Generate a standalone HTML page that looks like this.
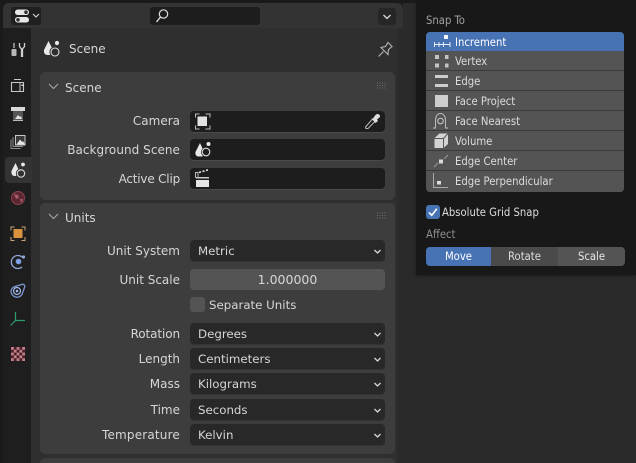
<!DOCTYPE html>
<html><head><meta charset="utf-8">
<style>
html,body{margin:0;padding:0;background:#1a1a1a}
#r{position:relative;width:636px;height:463px;overflow:hidden;background:#1a1a1a;font-family:"DejaVu Sans",sans-serif;font-size:12px;color:#d6d6d6}
#r div{position:absolute;box-sizing:border-box}
.t{white-space:nowrap;line-height:16px}
.c{font-size:11.2px;font-stretch:condensed;font-family:"DejaVu Sans Condensed","DejaVu Sans",sans-serif}
.l{text-align:right;width:180px;left:0}
.f{left:190px;width:195px;height:21px;background:#1d1d1d;border-radius:4px;box-shadow:0 1px 0 #4a4a4a}
.d{left:190px;width:195px;height:21px;background:#282828;border-radius:4px;box-shadow:0 1px 0 #333}
.d span{position:absolute;left:8px;top:3px;line-height:16px;white-space:nowrap;font-size:11.8px}
svg{position:absolute;overflow:visible}
.m{left:426px;width:198px;height:20px;background:#545454;border-bottom:1px solid #3a3a3a}
.m span{position:absolute;left:29px;top:3px;line-height:16px;font-size:11.2px;font-stretch:condensed;font-family:"DejaVu Sans Condensed","DejaVu Sans",sans-serif;color:#dcdcdc;white-space:nowrap}
</style></head><body>
<div id="r">
<!-- main areas -->
<div style="left:3px;top:3px;width:400px;height:25px;background:#333;border-radius:6px 6px 0 0"></div>
<div style="left:3px;top:28px;width:28px;height:435px;background:#1e1e1e"></div>
<div style="left:31px;top:28px;width:372px;height:435px;background:#2f2f2f"></div>
<div style="left:397px;top:28px;width:6px;height:435px;background:#2b2b2b"></div>
<div style="left:403px;top:0;width:233px;height:463px;background:#2a2a2a"></div>
<div style="left:0;top:0;width:636px;height:3px;background:#1a1a1a"></div>

<!-- header -->
<div style="left:11px;top:7px;width:30px;height:18px;background:#1f1f1f;border-radius:3px"></div>
<svg style="left:0;top:0" width="50" height="30"><rect x="15" y="9.500" width="14" height="5.500" rx="2.700" fill="#e6e6e6"/><rect x="15" y="17" width="14" height="5.500" rx="2.700" fill="#e6e6e6"/><circle cx="26" cy="12.200" r="1.800" fill="#333"/><circle cx="18" cy="19.800" r="1.800" fill="#333"/><path d="M33 14l3 3 3-3" fill="none" stroke="#ccc" stroke-width="1.200"/></svg>
<div style="left:150px;top:7px;width:110px;height:18px;background:#1d1d1d;border-radius:3px"></div>
<svg style="left:150px;top:7px" width="30" height="18"><circle cx="13.500" cy="7" r="4.200" fill="none" stroke="#ddd" stroke-width="1.200"/><path d="M10.500 10l-4 5" stroke="#ddd" stroke-width="1.400"/></svg>
<div style="left:378px;top:8px;width:18px;height:17px;background:#262626;border-radius:3px"></div>
<svg style="left:378px;top:8px" width="18" height="17"><path d="M5.500 7l3.500 3.500 3.500-3.500" fill="none" stroke="#ddd" stroke-width="1.300"/></svg>

<!-- tabs -->
<div style="left:5px;top:157px;width:27px;height:26px;background:#333;border-radius:4px 0 0 4px"></div>
<svg style="left:0;top:0" width="32" height="370">
<!-- tool -->
<path d="M14 43v5" stroke="#ccc" stroke-width="1.200"/><rect x="11.500" y="49" width="5" height="7" rx="1" fill="#b8b8b8"/>
<path d="M19.500 43v3.500l2 2.500v8" fill="none" stroke="#d0d0d0" stroke-width="1.300"/><path d="M24.500 43v3.500l-2 2.500v8" fill="none" stroke="#d0d0d0" stroke-width="1.300"/>
<!-- render -->
<path d="M14 79.500h7M11.500 82.500h12v9h-12z" fill="none" stroke="#c8c8c8" stroke-width="1.100"/><path d="M20 83v8" stroke="#c8c8c8"/><rect x="21.500" y="84.500" width="2" height="1.500" fill="#ddd"/>
<!-- output -->
<rect x="11" y="107" width="14" height="4" fill="#d8d8d8"/><path d="M13 111h10v9h-10z" fill="#565656"/><path d="M15 119l3-4 2 2 1-1 1 3z" fill="#e4e4e4"/><rect x="13" y="120" width="10" height="1" fill="#bbb"/>
<!-- view layer -->
<rect x="15.500" y="135.500" width="9.500" height="9.500" fill="#3a3a3a" stroke="#c8c8c8"/><path d="M16.500 144.500l3.500-5 2 2.500 1-1 2 3.500z" fill="#e6e6e6"/><path d="M13 137v9.500h10M11 139.500v9h9.500" fill="none" stroke="#8c8c8c"/>
<!-- scene -->
<path d="M15.500 163l-4 8c-.5 3 1 5 3 5h3.500l1-5.500z" fill="#e8e8e8"/><circle cx="23" cy="164.500" r="1.900" fill="#e8e8e8"/><circle cx="21" cy="173.500" r="5.200" fill="#333"/><circle cx="21" cy="173.500" r="3.700" fill="none" stroke="#ddd" stroke-width="1.100"/>
<!-- world -->
<circle cx="18" cy="198" r="6.500" fill="#5c2630" stroke="#8c4250"/><path d="M14 194l4 1 1 3-3 1zM20 199l3 0-2 4z" fill="#a45c6c"/>
<!-- object -->
<rect x="13.500" y="229" width="9" height="9" fill="#d8913c"/><path d="M11 230.500v-3.500h3.500M21.500 227h3.500v3.500M11 237v3.500h3.500M21.500 240.500h3.500v-3.500" fill="none" stroke="#c8a47c" stroke-width="1"/>
<!-- physics -->
<path d="M22 257a6.500 6.500 0 1 0 0 10" fill="none" stroke="#8ea6d8" stroke-width="1.300"/><circle cx="18.500" cy="261.500" r="2.800" fill="#7f9fe6"/><circle cx="23.500" cy="257" r="1.600" fill="#8ea6d8"/>
<!-- constraints -->
<path d="M11 291a6 6 0 0 0 11 3.500l2.500-7c1-2-1-4-3-3l-6.500 2a6 6 0 0 0-4 4.500z" fill="none" stroke="#7c96cf" stroke-width="1.300"/><circle cx="17" cy="291" r="3.500" fill="none" stroke="#a0b8ec" stroke-width="1.200"/><circle cx="17" cy="291" r="1.300" fill="#a0b8ec"/>
<!-- data -->
<path d="M15.500 312v8.500L10.500 325.500M15.500 320.500h9.500" fill="none" stroke="#2f9b6e" stroke-width="1.200"/>
<!-- texture -->
<rect x="11" y="347" width="14" height="14" fill="#4a2025"/>
<path d="M11 347h2.800v2.800h-2.800zM16.600 347h2.800v2.800h-2.800zM22.200 347h2.800v2.800h-2.800zM13.800 349.800h2.800v2.800h-2.800zM19.400 349.800h2.800v2.800h-2.800zM11 352.600h2.800v2.800h-2.800zM16.600 352.600h2.800v2.800h-2.800zM22.200 352.600h2.800v2.800h-2.800zM13.800 355.400h2.800v2.800h-2.800zM19.400 355.400h2.800v2.800h-2.800zM11 358.200h2.800v2.800h-2.800zM16.600 358.200h2.800v2.800h-2.800zM22.200 358.200h2.800v2.800h-2.800z" fill="#c2808c"/>
</svg>

<!-- title -->
<svg style="left:0;top:0" width="70" height="60"><path d="M48.500 41l-4.500 9c-.5 3 1 5 3.500 5h4l1-6z" fill="#e8e8e8"/><circle cx="57" cy="43" r="2.100" fill="#e8e8e8"/><circle cx="55" cy="52" r="5.500" fill="#2f2f2f"/><circle cx="55" cy="52" r="4" fill="none" stroke="#ddd" stroke-width="1.100"/></svg>
<div class="t" style="left:69px;top:41px">Scene</div>
<svg style="left:376px;top:40px" width="20" height="20"><path d="M2.500 16.500l5-5M5 7.500l7 7 .5-5 3.500-3-4-4-2.500 4z" fill="none" stroke="#aaa" stroke-width="1.200"/></svg>

<!-- Scene panel -->
<div style="left:40px;top:72px;width:355px;height:128px;background:#3d3d3d;border-radius:5px"></div>
<svg style="left:40px;top:72px" width="355" height="30"><path d="M9 12l4.500 4.500L18 12" fill="none" stroke="#a8a8a8" stroke-width="1.100"/><path d="M337 11h10M337 13.500h10M337 16h10" stroke="#6e6e6e" stroke-width="1" stroke-dasharray="1 1.500"/></svg>
<div class="t" style="left:65px;top:80px">Scene</div>
<div class="t l" style="top:113px">Camera</div>
<div class="t l" style="top:142px;letter-spacing:.05px">Background Scene</div>
<div class="t l" style="top:171px;letter-spacing:-.2px">Active Clip</div>
<div class="f" style="top:111px"></div>
<div class="f" style="top:139px;height:21px"></div>
<div class="f" style="top:168px"></div>
<svg style="left:190px;top:111px" width="195" height="80">
<rect x="7.500" y="5.500" width="9.500" height="9.500" fill="#e2e2e2"/><path d="M5.500 6.500v-3.500h4M15.500 3h4.500v3.500M5.500 14.500v3.500h4M15.500 18h4.500v-3.500" fill="none" stroke="#bbb"/>
<path d="M176 17.500l-.5-1.500 7-8 2.500 2.500-7 7z" fill="none" stroke="#bbb"/><path d="M181 7l1.500 1 3-4c1.500-2 5-1 4.500 2l-3 2.500 1 1.500-2.500 2z" fill="#ddd"/>
<path d="M10 32l-4.500 9c-.5 3 1 4.500 3 4.500h4l1-6z" fill="#e8e8e8"/><circle cx="18.500" cy="33" r="2" fill="#e8e8e8"/><circle cx="16" cy="41" r="5" fill="#1d1d1d"/><circle cx="16" cy="41" r="3.800" fill="none" stroke="#ddd" stroke-width="1.100"/>
<rect x="6" y="66" width="13" height="1.500" fill="#ccc"/><rect x="6" y="69" width="13" height="7" fill="#e6e6e6"/><rect x="5.500" y="61.500" width="2.500" height="5" fill="none" stroke="#bbb"/><path d="M9 61.500l2-.6M12.500 60.500l2-.6M16 59.500l2-.6" stroke="#e6e6e6" stroke-width="1.500"/>
</svg>

<!-- Units panel -->
<div style="left:40px;top:203px;width:355px;height:251px;background:#3d3d3d;border-radius:5px"></div>
<svg style="left:40px;top:203px" width="355" height="30"><path d="M9 11l4.500 4.500L18 11" fill="none" stroke="#a8a8a8" stroke-width="1.100"/><path d="M337 10h10M337 12.500h10M337 15h10" stroke="#6e6e6e" stroke-width="1" stroke-dasharray="1 1.500"/></svg>
<div class="t" style="left:65px;top:210px">Units</div>
<div class="t l" style="top:243px">Unit System</div>
<div class="t l" style="top:272px">Unit Scale</div>
<div class="t l" style="top:326px;letter-spacing:-.1px">Rotation</div>
<div class="t l" style="top:351px">Length</div>
<div class="t l" style="top:376px">Mass</div>
<div class="t l" style="top:402px">Time</div>
<div class="t l" style="top:427px;letter-spacing:.18px">Temperature</div>
<div class="d" style="top:240px"><span>Metric</span></div>
<div style="left:190px;top:269px;width:195px;height:21px;background:#545454;border-radius:4px"></div>
<div class="t" style="left:190px;top:272px;width:195px;text-align:center;font-size:12.5px">1.000000</div>
<div style="left:190px;top:297px;width:15px;height:15px;background:#545454;border-radius:3px"></div>
<div class="t" style="left:209px;top:297px;font-size:11.8px">Separate Units</div>
<div class="d" style="top:323px"><span>Degrees</span></div>
<div class="d" style="top:348px"><span>Centimeters</span></div>
<div class="d" style="top:373px"><span>Kilograms</span></div>
<div class="d" style="top:399px"><span>Seconds</span></div>
<div class="d" style="top:424px"><span>Kelvin</span></div>
<svg style="left:370px;top:240px" width="15" height="210" fill="none" stroke="#d8d8d8" stroke-width="1.300"><path d="M4.500 10l3 3 3-3M4.500 93l3 3 3-3M4.500 118l3 3 3-3M4.500 143l3 3 3-3M4.500 169l3 3 3-3M4.500 194l3 3 3-3"/></svg>
<div style="left:40px;top:458px;width:355px;height:5px;background:#3d3d3d;border-radius:5px 5px 0 0"></div>

<!-- popup -->
<div style="left:416px;top:0;width:220px;height:275px;background:#181818;box-shadow:0 1px 3px #1c1c1c"></div>
<div class="t c" style="left:426px;top:13px;color:#a0a0a0">Snap To</div>
<div style="left:426px;top:32px;width:198px;height:160px;background:#545454;border-radius:4px"></div>
<div class="m" style="top:32px;height:19px;background:#4772b3;border-radius:4px 4px 0 0;border:0"><span style="color:#fff">Increment</span></div>
<div class="m" style="top:51px"><span>Vertex</span></div>
<div class="m" style="top:71px"><span>Edge</span></div>
<div class="m" style="top:91px"><span>Face Project</span></div>
<div class="m" style="top:111px"><span>Face Nearest</span></div>
<div class="m" style="top:131px"><span>Volume</span></div>
<div class="m" style="top:151px"><span>Edge Center</span></div>
<div class="m" style="top:171px;height:21px;border:0;background:#545454;border-radius:0 0 4px 4px"><span>Edge Perpendicular</span></div>
<svg style="left:425px;top:30px" width="40" height="165">
<rect x="19" y="5" width="4" height="4" fill="#f0f6ff"/><path d="M9.500 14.500h16M9.500 12v5M14 12v5M18.500 12v5M25 12v5" stroke="#e6eefa" fill="none"/>
<path d="M10 25h4v4h-4zM20 25h3.500v4h-3.500zM10 33.500h4v4h-4zM20 33.500h3.500v4h-3.500z" fill="#c4c4c4"/>
<rect x="10" y="45" width="13" height="3" fill="#cdcdcd"/><rect x="10" y="54" width="13" height="3" fill="#cdcdcd"/>
<rect x="10" y="65" width="13" height="12" fill="#cdcdcd"/>
<path d="M10.500 97.500v-7.500c0-3.500 2-6.500 5-6.500s5 3 5 6.500v7.500M8 98h3M20 98h3" fill="none" stroke="#bbb"/><circle cx="15.500" cy="91" r="2.800" fill="none" stroke="#ccc"/>
<path d="M9.500 108l5-4.500h8.500v10.500l-4.500 4H9.500z" fill="#d4d4d4"/><path d="M18.500 108.500v9.500M9.500 108.500h9l4.500-5" fill="none" stroke="#545454"/>
<path d="M9 137l4-4M19 129l4-4" stroke="#999"/><rect x="14" y="129.500" width="4" height="4" fill="#d8d8d8"/>
<path d="M8.500 143v14.500h14.500" fill="none" stroke="#aaa"/><rect x="12" y="151" width="4" height="3.500" fill="#ddd"/>
</svg>
<div style="left:426px;top:205px;width:14px;height:14px;background:#4772b3;border-radius:3px"></div>
<svg style="left:426px;top:205px" width="14" height="14"><path d="M3 7.500l2.800 2.800 5-6.500" fill="none" stroke="#fff" stroke-width="1.600"/></svg>
<div class="t c" style="left:442px;top:205px;color:#dcdcdc">Absolute Grid Snap</div>
<div class="t c" style="left:426px;top:227px;color:#8e8e8e">Affect</div>
<div style="left:426px;top:247px;width:199px;height:19px;background:#545454;border-radius:4px"></div>
<div style="left:426px;top:247px;width:65px;height:19px;background:#4772b3;border-radius:4px 0 0 4px"></div>
<div style="left:491px;top:247px;width:67px;height:19px;background:#4a4a4a"></div>
<div class="t c" style="left:426px;top:249px;width:65px;text-align:center;color:#fff">Move</div>
<div class="t c" style="left:491px;top:249px;width:67px;text-align:center;color:#dcdcdc">Rotate</div>
<div class="t c" style="left:558px;top:249px;width:67px;text-align:center;color:#e6e6e6">Scale</div>
</div>
</body></html>
